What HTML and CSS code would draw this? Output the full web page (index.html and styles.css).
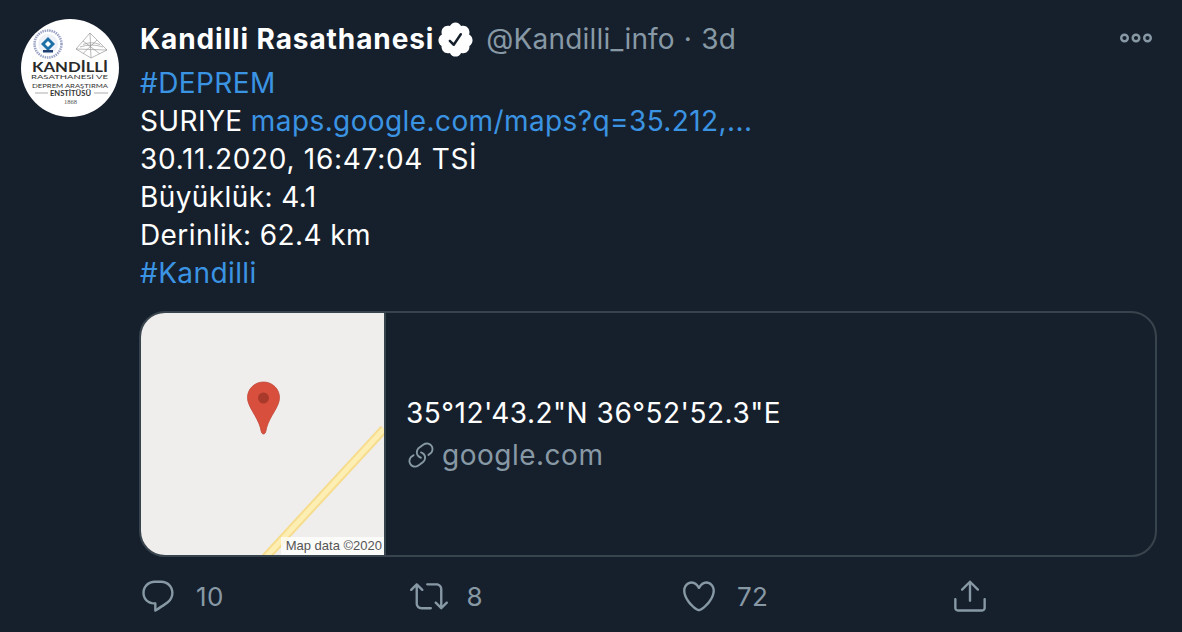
FILE: index.html
```html
<!DOCTYPE html>
<html lang="tr">
<head>
<meta charset="utf-8">
<title>Kandilli Rasathanesi</title>
<link rel="stylesheet" href="styles.css">
</head>
<body>
<main class="tweet">
  <div class="avatar">
    <svg class="avatar-art" viewBox="0 0 98 98" width="98" height="98">
      <circle cx="49" cy="49" r="49" fill="#fff"/>
      <circle cx="27" cy="25" r="13.500" fill="none" stroke="#9aa3c4" stroke-width="2.500" stroke-dasharray="1.500 .8"/>
      <circle cx="27" cy="25" r="10" fill="#eef2f8"/>
      <path d="M27 18l7 7-7 7-7-7z" fill="#1d6fa8"/>
      <path d="M27 22l3 3-3 3-3-3z" fill="#fff"/>
      <path d="M22 31h10v2.500H22z" fill="#1f3f70"/>
      <g fill="none" stroke="#8a8a8a" stroke-width=".6">
        <path d="M69 14L86 31 70 39 55 30z"/>
        <path d="M69 14L70 39M62 22L79 35M76 21L62 34.500M55 30L86 31"/>
        <path d="M62 25.500Q70 22 79 25.500M59 28Q70 24 82 28"/>
      </g>
      <text class="logo-main" x="11" y="53" textLength="76" lengthAdjust="spacingAndGlyphs">KANDİLLİ</text>
      <text class="logo-sub" x="10" y="60" textLength="77" lengthAdjust="spacingAndGlyphs">RASATHANESİ VE</text>
      <text class="logo-sub" x="11" y="69" textLength="76" lengthAdjust="spacingAndGlyphs">DEPREM ARAŞTIRMA</text>
      <text class="logo-sub logo-bold" x="29" y="77" textLength="41" lengthAdjust="spacingAndGlyphs">ENSTİTÜSÜ</text>
      <path d="M14 74H27M73 74H87" stroke="#888" stroke-width=".7"/>
      <text class="logo-year" x="43" y="85" textLength="13" lengthAdjust="spacingAndGlyphs">1868</text>
    </svg>
  </div>

  <div class="body">
    <header class="head">
      <span class="name">Kandilli Rasathanesi</span>
      <svg class="badge" viewBox="0 0 24 24"><path fill="#fff" d="M22.5 12.500c0-1.580-.875-2.950-2.148-3.600.154-.435.238-.905.238-1.400 0-2.210-1.710-3.998-3.818-3.998-.47 0-.92.084-1.336.25C14.818 2.415 13.510 1.500 12 1.500s-2.816.917-3.437 2.250c-.415-.165-.866-.25-1.336-.25-2.110 0-3.818 1.790-3.818 4 0 .494.083.964.237 1.400-1.272.65-2.147 2.018-2.147 3.600 0 1.495.782 2.798 1.942 3.486-.02.17-.032.34-.032.514 0 2.210 1.708 4 3.818 4 .47 0 .92-.086 1.335-.25.62 1.334 1.926 2.250 3.437 2.250 1.512 0 2.818-.916 3.437-2.250.415.163.865.248 1.336.248 2.110 0 3.818-1.790 3.818-4 0-.174-.012-.344-.033-.513 1.158-.687 1.943-1.990 1.943-3.484zm-6.616-3.334l-4.334 6.500c-.145.217-.382.334-.625.334-.143 0-.288-.04-.416-.126l-.115-.094-2.415-2.415c-.293-.293-.293-.768 0-1.060s.768-.294 1.060 0l1.770 1.767 3.825-5.740c.23-.345.696-.436 1.040-.207.346.23.44.696.21 1.040z"/></svg>
      <span class="handle">@Kandilli_info</span>
      <span class="handle sep">·</span>
      <span class="handle">3d</span>
      <svg class="more" viewBox="0 0 34 12"><g fill="none" stroke="#8899a6" stroke-width="2.400"><circle cx="5.500" cy="6" r="3.300"/><circle cx="17" cy="6" r="3.300"/><circle cx="28.500" cy="6" r="3.300"/></g></svg>
    </header>

    <div class="text">
      <div class="link">#DEPREM</div>
      <div>SURIYE <span class="link">maps.google.com/maps?q=35.212,...</span></div>
      <div class="date">30.11.2020, 16:47:04 TSİ</div>
      <div>Büyüklük: 4.1</div>
      <div>Derinlik: 62.4 km</div>
      <div class="link">#Kandilli</div>
    </div>

    <article class="card">
      <div class="map">
        <svg class="map-art" viewBox="0 0 243 243" width="243" height="243">
          <rect width="243" height="243" fill="#efeeec"/>
          <path d="M243 116L124 245" stroke="#f6dc8c" stroke-width="9" fill="none"/>
          <path d="M243 116L124 245" stroke="#fdefb4" stroke-width="5" fill="none"/>
          <path d="M122.500 69C113.500 69 106.500 76 106.500 84.500C106.500 94 116 102.500 119.500 115C120 118 120.500 121 122.500 121C124.500 121 125 118 125.500 115C129 102.500 138.500 94 138.500 84.500C138.500 76 131.500 69 122.500 69Z" fill="#d94f3d" stroke="#c0483a" stroke-width=".8"/>
          <circle cx="122.500" cy="85" r="5.500" fill="#a93a2b"/>
        </svg>
        <span class="map-label">Map data ©2020</span>
      </div>
      <div class="card-info">
        <div class="card-title">35°12'43.2"N 36°52'52.3"E</div>
        <div class="card-domain">
          <svg class="link-icon" viewBox="0 0 24 24"><path fill="#8899a6" d="M11.960 14.945c-.067 0-.136-.01-.203-.027-1.130-.318-2.097-.986-2.795-1.932-.832-1.125-1.176-2.508-.968-3.893s.942-2.605 2.068-3.438l3.530-2.608c2.322-1.716 5.610-1.224 7.330 1.100.83 1.127 1.175 2.510.967 3.895s-.943 2.605-2.070 3.438l-1.480 1.094c-.333.246-.804.175-1.050-.158-.246-.334-.176-.804.158-1.050l1.480-1.095c.803-.592 1.327-1.463 1.476-2.450.148-.988-.098-1.975-.69-2.778-1.225-1.656-3.572-2.010-5.230-.784l-3.530 2.608c-.802.593-1.326 1.464-1.475 2.450-.15.99.097 1.975.69 2.778.498.675 1.187 1.150 1.992 1.377.4.114.633.528.52.928-.092.33-.394.547-.722.547z"/><path fill="#8899a6" d="M7.270 22.054c-1.610 0-3.197-.735-4.225-2.125-.832-1.127-1.176-2.510-.968-3.894s.943-2.605 2.070-3.438l1.478-1.094c.334-.245.805-.175 1.050.158s.177.804-.157 1.050l-1.480 1.095c-.803.593-1.326 1.464-1.475 2.450-.148.99.097 1.975.69 2.778 1.225 1.657 3.570 2.010 5.230.785l3.528-2.608c1.658-1.225 2.010-3.570.785-5.230-.498-.674-1.187-1.150-1.992-1.376-.4-.113-.633-.527-.52-.927.112-.4.528-.63.926-.522 1.130.318 2.096.986 2.794 1.932 1.717 2.324 1.224 5.612-1.100 7.330l-3.530 2.608c-.933.693-2.023 1.026-3.105 1.026z"/></svg>
          <span>google.com</span>
        </div>
      </div>
    </article>

    <footer class="actions">
      <div class="action">
        <svg class="icon" viewBox="0 0 24 24"><path d="M14.046 2.242l-4.148-.01h-.002c-4.374 0-7.800 3.427-7.800 7.802 0 4.098 3.186 7.206 7.465 7.370v3.828c0 .108.044.286.12.403.142.225.384.347.632.347.138 0 .277-.038.402-.118.264-.168 6.473-4.140 8.088-5.506 1.902-1.610 3.040-3.970 3.043-6.312v-.017c-.006-4.367-3.430-7.787-7.800-7.788zm3.787 12.972c-1.134.96-4.862 3.405-6.772 4.643V16.670c0-.414-.335-.75-.75-.75h-.396c-3.660 0-6.318-2.476-6.318-5.886 0-3.534 2.768-6.302 6.300-6.302l4.147.01h.002c3.532 0 6.300 2.766 6.302 6.296-.003 1.910-.942 3.844-2.514 5.176z"/></svg>
        <span class="count">10</span>
      </div>
      <div class="action">
        <svg class="icon" viewBox="0 0 24 24"><path d="M23.770 15.670c-.292-.293-.767-.293-1.060 0l-2.220 2.220V7.650c0-2.068-1.683-3.750-3.750-3.750h-5.850c-.414 0-.75.336-.75.75s.336.75.75.75h5.850c1.240 0 2.250 1.010 2.250 2.250v10.240l-2.220-2.220c-.293-.293-.768-.293-1.060 0s-.294.768 0 1.060l3.500 3.500c.145.147.337.22.53.22s.383-.072.53-.22l3.500-3.500c.294-.292.294-.767 0-1.060zm-10.660 3.280H7.260c-1.240 0-2.250-1.010-2.250-2.250V6.460l2.220 2.220c.148.147.34.22.532.22s.384-.073.53-.22c.293-.293.293-.768 0-1.060l-3.500-3.500c-.293-.294-.768-.294-1.060 0l-3.500 3.500c-.294.292-.294.767 0 1.060s.767.293 1.060 0l2.220-2.220V16.700c0 2.068 1.683 3.750 3.750 3.750h5.850c.414 0 .75-.336.75-.75s-.337-.75-.75-.75z"/></svg>
        <span class="count">8</span>
      </div>
      <div class="action">
        <svg class="icon" viewBox="0 0 24 24"><path d="M12 21.638h-.014C9.403 21.590 1.950 14.856 1.950 8.478c0-3.064 2.525-5.754 5.403-5.754 2.290 0 3.830 1.580 4.646 2.730.814-1.148 2.354-2.730 4.645-2.730 2.880 0 5.404 2.690 5.404 5.755 0 6.376-7.454 13.110-10.037 13.157H12zM7.354 4.225c-2.080 0-3.903 1.988-3.903 4.255 0 5.740 7.034 11.596 8.550 11.658 1.518-.062 8.550-5.917 8.550-11.658 0-2.267-1.823-4.255-3.903-4.255-2.528 0-3.940 2.936-3.952 2.965-.23.562-1.156.562-1.387 0-.014-.03-1.425-2.965-3.954-2.965z"/></svg>
        <span class="count">72</span>
      </div>
      <div class="action">
        <svg class="icon" viewBox="0 0 24 24"><path d="M17.530 7.470l-5-5c-.293-.293-.768-.293-1.060 0l-5 5c-.294.293-.294.768 0 1.060s.767.294 1.060 0l3.720-3.720V15c0 .414.336.75.75.75s.75-.336.75-.75V4.810l3.720 3.720c.146.147.338.22.53.22s.384-.072.53-.22c.293-.293.293-.767 0-1.060z"/><path d="M19.708 21.944H4.292C3.028 21.944 2 20.916 2 19.652V14c0-.414.336-.75.75-.75s.75.336.75.75v5.652c0 .437.355.792.792.792h15.416c.437 0 .792-.355.792-.792V14c0-.414.336-.75.75-.75s.75.336.75.75v5.652c0 1.264-1.028 2.292-2.292 2.292z"/></svg>
      </div>
    </footer>
  </div>
</main>
</body>
</html>
```
FILE: styles.css
```css
* { box-sizing: border-box; }
html, body { margin: 0; height: 100%; }
body {
  width: 1182px;
  height: 632px;
  overflow: hidden;
  background: #16202c;
  color: #fff;
  font-family: Inter, "Liberation Sans", sans-serif;
}
.tweet {
  display: flex;
  gap: 21px;
  padding: 20px 25px 0 21px;
}
.avatar { flex: 0 0 98px; height: 98px; margin-top: -1px; }
.avatar-art { display: block; }
.logo-main { font: 700 14px Lato, "Liberation Sans", sans-serif; fill: #2a2a2a; }
.logo-sub { font: 400 6.500px Lato, "Liberation Sans", sans-serif; fill: #333; }
.logo-bold { font-weight: 700; }
.logo-year { font: 400 5.500px "Liberation Serif", serif; fill: #555; }

.body { flex: 1; min-width: 0; }
.head {
  display: flex;
  align-items: center;
  height: 38px;
  font-size: 28px;
  line-height: 38px;
  letter-spacing: .2px;
}
.name { font-weight: 700; letter-spacing: .9px; }
.badge { flex: none; width: 39px; height: 39px; margin: 0 11px 0 2px; }
.handle { color: #8899a6; }
.sep { margin: 0 9px; }
.more { flex: none; width: 34px; height: 12px; margin: -3px 4px 0 auto; }

.text {
  font-size: 28px;
  line-height: 38px;
  letter-spacing: .4px;
  margin-top: 6px;
}
.date { letter-spacing: .7px; }
.link { color: #3b94e3; }

.card {
  display: flex;
  width: 1018px;
  height: 246px;
  margin: 19px 0 0 -1px;
  border: 2px solid #38444d;
  border-radius: 26px;
  overflow: hidden;
}
.map {
  position: relative;
  flex: 0 0 245px;
  height: 100%;
  border-right: 2px solid #38444d;
}
.map-art { display: block; }
.map-label {
  position: absolute;
  right: 0;
  bottom: 0;
  padding: 0 2px 0 5px;
  background: rgba(255, 255, 255, .75);
  color: #555;
  font: 13px/18px "Liberation Sans", sans-serif;
  white-space: nowrap;
}
.card-info {
  display: flex;
  flex-direction: column;
  justify-content: center;
  gap: 4px;
  padding: 0 20px;
  font-size: 28px;
  line-height: 38px;
  letter-spacing: .5px;
}
.card-domain {
  display: flex;
  align-items: center;
  gap: 6px;
  color: #8899a6;
}
.link-icon { flex: none; width: 30px; height: 30px; }

.actions {
  display: grid;
  grid-template-columns: repeat(4, 270.500px);
  margin: 20px 0 0 -1px;
}
.action {
  display: flex;
  align-items: center;
  gap: 19px;
  height: 38px;
}
.icon { flex: none; width: 38px; height: 38px; fill: #8899a6; }
.count {
  color: #8899a6;
  font-size: 26px;
  letter-spacing: .3px;
}
```
